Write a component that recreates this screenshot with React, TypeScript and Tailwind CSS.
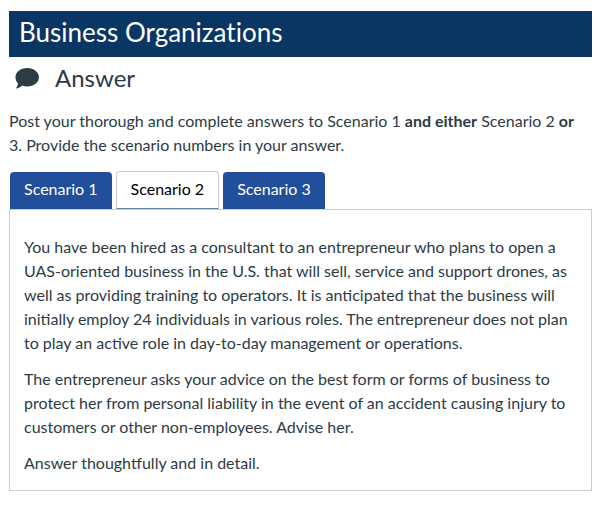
import { useState } from "react";

const scenarios = ["Scenario 1", "Scenario 2", "Scenario 3"];

const ChatIcon = () => (
  <svg viewBox="0 0 24 21" className="h-[21px] w-6 fill-[#2d3b45]" aria-hidden="true">
    <path d="M12.200 0C18.800 0 23.900 4 23.900 9.200S18.800 18.400 12.200 18.400c-1.900 0-3.700-.3-5.200-.9C5.200 19.200 3.300 20.200 .700 20.600c1.300-1.600 2-3.200 2.200-5.200C1.300 13.700.500 11.600.500 9.200 .500 4 5.500 0 12.200 0Z" />
  </svg>
);

export default function App() {
  const [active, setActive] = useState(1);

  return (
    <main className="min-h-screen bg-white pt-[11px] pr-4 pl-[9px] font-['Lato',sans-serif] text-base leading-6 text-[#2d3b45]">
      <h1 className="bg-[#0a3663] px-[10px] pb-1 text-[26px] leading-[42px] text-white [font-variant-ligatures:none]">
        Business Organizations
      </h1>
      <h2 className="flex items-center gap-4 pt-1 pb-[2px] pl-[6px] text-2xl leading-[34px]">
        <ChatIcon />
        Answer
      </h2>
      <p className="mt-3 pr-2">
        Post your thorough and complete answers to Scenario 1 <strong>and either</strong> Scenario 2{" "}
        <strong>or</strong> 3. Provide the scenario numbers in your answer.
      </p>
      <div role="tablist" className="mt-[14px] flex gap-[3px]">
        {scenarios.map((name, i) => (
          <button
            key={name}
            role="tab"
            aria-selected={i === active}
            onClick={() => setActive(i)}
            className={
              i === active
                ? "rounded-t border border-[#c7cdd1] border-b-[#5f83a8] px-[14px] pt-[5px] pb-[7px] text-black"
                : "rounded-t-[5px] border border-b-0 border-transparent bg-[#214f9b] bg-clip-padding px-[14px] pt-[5px] pb-2 text-white"
            }
          >
            {name}
          </button>
        ))}
      </div>
      <section role="tabpanel" className="space-y-3 border border-[#c7cdd1] px-[14px] pt-[25px] pb-[15px]">
        <p>
          You have been hired as a consultant to an entrepreneur who plans to open a UAS-oriented business in the
          U.S. that will sell, service and support drones, as well as providing training to operators. It is
          anticipated that the business will initially employ 24 individuals in various roles. The entrepreneur does
          not plan to play an active role in day-to-day management or operations.
        </p>
        <p>
          The entrepreneur asks your advice on the best form or forms of business to protect her from personal
          liability in the event of an accident causing injury to customers or other non-employees. Advise her.
        </p>
        <p>Answer thoughtfully and in detail.</p>
      </section>
    </main>
  );
}
